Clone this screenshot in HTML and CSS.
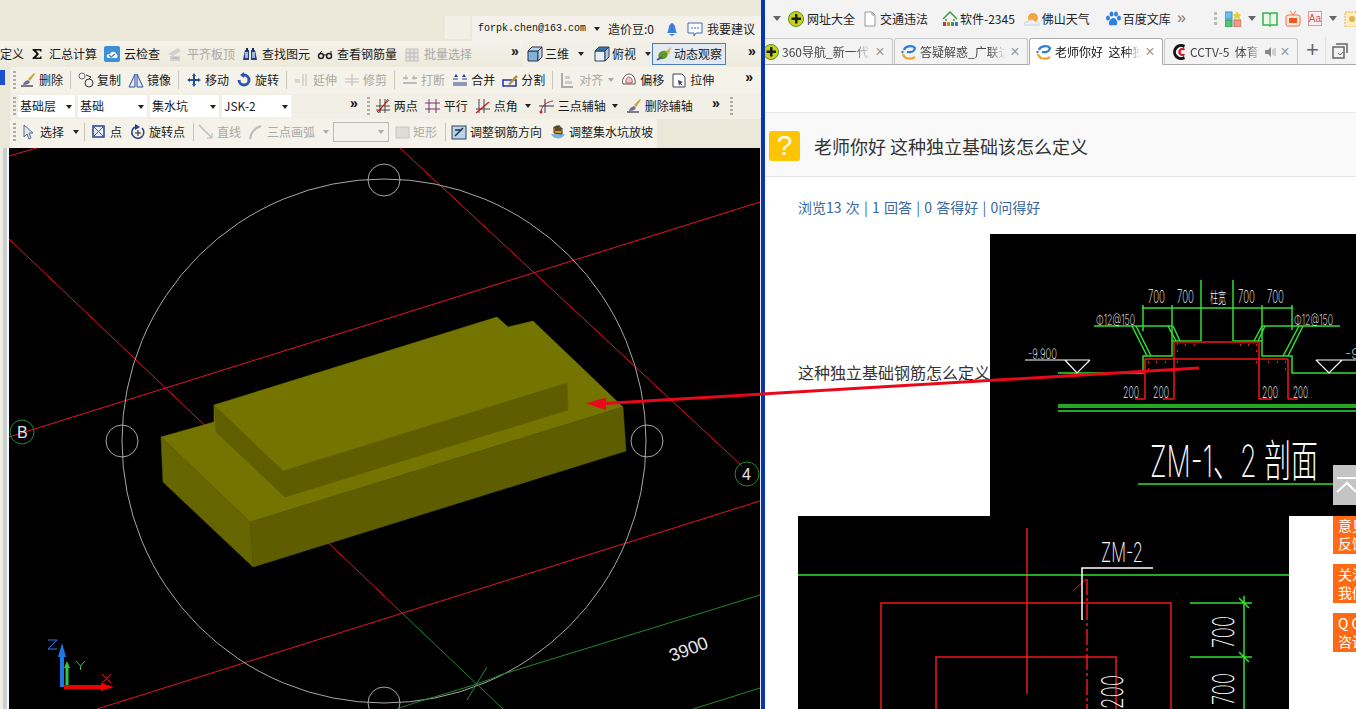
FILE: index.html
```html
<!DOCTYPE html>
<html lang="zh">
<head>
<meta charset="utf-8">
<title>老师你好 这种独立基础该怎么定义</title>
<link rel="stylesheet" href="styles.css">
</head>
<body>
<svg class="defs" width="0" height="0">
  <symbol id="brush" viewBox="0 0 16 16"><path d="M1 14h12" stroke="#555" stroke-width="1.5"/><path d="M3 13c1-4 3-4 5-5l2 2c-1 2-3 3-7 3z" fill="#7a6a9a"/><path d="M8 7l6-6 1 1-5 7z" fill="#c9a640"/></symbol>
  <symbol id="copy" viewBox="0 0 16 16"><circle cx="4" cy="4" r="3" fill="none" stroke="#667"/><circle cx="11" cy="11" r="4" fill="none" stroke="#335"/><path d="M8 3l5 2-2 2" fill="none" stroke="#335"/></symbol>
  <symbol id="mirror" viewBox="0 0 16 16"><path d="M7 2v13H1zM9 2v13h6z" fill="#dfe8f6" stroke="#2c4f9e"/></symbol>
  <symbol id="move" viewBox="0 0 16 16"><path d="M8 1l2 3H9v3h3V6l3 2-3 2V9H9v3h1l-2 3-2-3h1V9H4v1L1 8l3-2v1h3V4H6z" fill="#23508f"/></symbol>
  <symbol id="rotate" viewBox="0 0 16 16"><path d="M8 3a5 5 0 1 1-5 5" fill="none" stroke="#2a55b5" stroke-width="3"/><path d="M8 0v6L4 3z" fill="#2a55b5"/></symbol>
  <symbol id="gline" viewBox="0 0 16 16"><path d="M1 8h5M1 10h5M9 2v12M12 2v12" stroke="#bbb" fill="none"/></symbol>
  <symbol id="gtrim" viewBox="0 0 16 16"><path d="M1 7h14M1 10h14M8 2v12" stroke="#bbb" fill="none"/></symbol>
  <symbol id="gsplit" viewBox="0 0 16 16"><path d="M1 11h14M1 6h5M10 6h5" stroke="#bbb" stroke-width="2" fill="none"/><path d="M4 3v5M12 3v5" stroke="#bbb"/></symbol>
  <symbol id="merge" viewBox="0 0 16 16"><path d="M1 11h14M1 13h14" stroke="#25408f" fill="none"/><path d="M4 2l2 3H2zM12 2l2 3h-4z" fill="#25408f"/><path d="M1 7h5M10 7h5" stroke="#25408f"/></symbol>
  <symbol id="split" viewBox="0 0 16 16"><rect x="1" y="8" width="13" height="6" fill="none" stroke="#23a" stroke-width="1.5"/><path d="M6 12l8-9 2 2-8 8z" fill="#b9923f"/></symbol>
  <symbol id="galign" viewBox="0 0 16 16"><path d="M2 1v14h11" stroke="#aaa" fill="none" stroke-width="2"/><path d="M5 4h5v3H5zM5 9h7v3H5z" fill="#ccc"/></symbol>
  <symbol id="offset" viewBox="0 0 16 16"><path d="M2 12c-2-4 2-10 6-10s7 5 6 10z" fill="#fff" stroke="#555"/><path d="M5 11c-1-3 1-6 3-6s4 3 3 6z" fill="#f0c6c6" stroke="#b55"/></symbol>
  <symbol id="stretch" viewBox="0 0 16 16"><path d="M2 2h9l3 3v10H2z" fill="#fff" stroke="#445"/><path d="M7 8l5 2-2 1 2 3-3-2-1 2z" fill="#446"/></symbol>
  <symbol id="sum" viewBox="0 0 16 16"><path d="M3.500 3h9v2.500h-1.500v-1H7l3 3.500-3 3.500h4v-1h1.500V13h-9v-1l4-4-4-4z" fill="#111"/></symbol>
  <symbol id="cloud" viewBox="0 0 16 16"><rect width="16" height="16" rx="2" fill="#3e8fd6"/><path d="M3 11c-1-3 2-3 3-3 1-3 6-3 6 0 2 0 2 4 0 4H4z" fill="#fff"/><path d="M5 9l2 2 4-3" fill="none" stroke="#3e8fd6" stroke-width="1.500"/></symbol>
  <symbol id="gboard" viewBox="0 0 16 16"><path d="M1 8l10-6 3 3-8 5zM3 10h10v5H3z" fill="#cfd2cd"/><path d="M5 12h7" stroke="#aab"/></symbol>
  <symbol id="bino" viewBox="0 0 16 16"><path d="M1 14l2-10h4v10zM9 14V4h4l2 10z" fill="#273f7e"/><path d="M3 6h3v6H3zM10 6h3v6h-3z" fill="#9fb6dc"/><path d="M4 2h2v3H4zM10 2h2v3h-2z" fill="#152a60"/></symbol>
  <symbol id="glasses" viewBox="0 0 16 16"><circle cx="4" cy="10" r="2.500" fill="none" stroke="#222" stroke-width="1.500"/><circle cx="12" cy="10" r="2.500" fill="none" stroke="#222" stroke-width="1.500"/><path d="M6 9h3M2 8l3-3M14 8V5" stroke="#222" fill="none"/></symbol>
  <symbol id="gbatch" viewBox="0 0 16 16"><rect x="2" y="3" width="12" height="12" fill="#e4e2da" stroke="#c3c3bd"/><path d="M2 7h12M2 11h12M6 3v12M10 3v12" stroke="#bbb"/></symbol>
  <symbol id="cube" viewBox="0 0 16 16"><path d="M1 5h10v10H1z" fill="#7fb2dc" stroke="#334"/><path d="M1 5l4-4h10l-4 4zM11 5l4-4v10l-4 4z" fill="#b9d6ee" stroke="#334"/></symbol>
  <symbol id="cube2" viewBox="0 0 16 16"><path d="M1 5h10v10H1z" fill="#e7eef7" stroke="#345"/><path d="M1 5l4-4h10l-4 4z" fill="#3c74ae" stroke="#345"/><path d="M11 5l4-4v10l-4 4z" fill="#a9c8e6" stroke="#345"/></symbol>
  <symbol id="orbit" viewBox="0 0 16 16"><ellipse cx="7" cy="9" rx="5" ry="4" fill="#5a9a2c" transform="rotate(-30 7 9)"/><path d="M9 6l6-5-2 7" fill="#d4b13a"/><path d="M1 14l5-3" stroke="#4a4aa0" stroke-width="2"/></symbol>
  <symbol id="twop" viewBox="0 0 16 16"><path d="M1 12h14M1 8h14M3 15L13 1" stroke="#444"/><path d="M5 1v14M10 1v14" stroke="#444"/><path d="M2 14L14 2" stroke="#c22"/></symbol>
  <symbol id="par" viewBox="0 0 16 16"><path d="M0 5h15M0 11h15M4 1v14M11 1v14" stroke="#7b2f6e"/></symbol>
  <symbol id="ang" viewBox="0 0 16 16"><path d="M1 11h14M4 1v14M9 1v14" stroke="#445"/><path d="M1 15L14 4" stroke="#c22" stroke-width="1.500"/></symbol>
  <symbol id="arc3" viewBox="0 0 16 16"><path d="M2 15c0-7 5-11 12-12" fill="none" stroke="#c22"/><path d="M0 8h15M6 1v14" stroke="#335"/><circle cx="2" cy="14" r="1.500" fill="#c22"/></symbol>
  <symbol id="cursor" viewBox="0 0 16 16"><path d="M4 1v12l3-3 2 5 2-1-2-5h4z" fill="#dfe6f2" stroke="#5a6a8a"/></symbol>
  <symbol id="pt" viewBox="0 0 16 16"><rect x="2" y="2" width="11" height="11" fill="#e9eef8" stroke="#25408f" stroke-width="1.500"/><path d="M2 2l11 11M13 2L2 13" stroke="#a33"/></symbol>
  <symbol id="rotpt" viewBox="0 0 16 16"><path d="M5 3a6 6 0 1 0 7 1" fill="none" stroke="#25408f" stroke-width="1.500"/><path d="M5 0l5 3-5 3z" fill="#25408f"/><path d="M8 6v6M5 9h6" stroke="#222"/></symbol>
  <symbol id="gstr" viewBox="0 0 16 16"><path d="M1 1l13 13" stroke="#bbb" stroke-width="1.500"/><path d="M14 14V9M14 14H9" stroke="#bbb"/></symbol>
  <symbol id="garc" viewBox="0 0 16 16"><path d="M2 15C3 8 7 4 13 2" stroke="#bbb" stroke-width="2" fill="none"/></symbol>
  <symbol id="grect" viewBox="0 0 16 16"><rect x="2" y="3" width="13" height="11" fill="#dedcd4" stroke="#c8c8c0"/></symbol>
  <symbol id="adj" viewBox="0 0 16 16"><rect x="1" y="2" width="14" height="13" fill="#b8d2ec" stroke="#345"/><path d="M4 12l8-8M4 6h7" stroke="#234" stroke-width="1.500"/></symbol>
  <symbol id="slope" viewBox="0 0 16 16"><path d="M1 10c3 6 11 6 14 0z" fill="#7fb2dc"/><path d="M4 9V3h2v4-5h2v5-5h2v5-3h2v6z" fill="#d99a1e" stroke="#332"/></symbol>
  <symbol id="bell" viewBox="0 0 16 16"><path d="M3 12c2-2 1-9 5-10 4 1 3 8 5 10z" fill="#3d7fd9"/><path d="M5 13h6l-3 2z" fill="#3d7fd9"/></symbol>
  <symbol id="chat" viewBox="0 0 16 16"><path d="M1 2h14v10H9l-2 3v-3H1z" fill="#fff" stroke="#3d6fb5"/><path d="M4 7h8" stroke="#3d6fb5" stroke-dasharray="2 1"/></symbol>
  <symbol id="n360" viewBox="0 0 16 16"><circle cx="8" cy="8" r="7.500" fill="#cfcf15" stroke="#4a9a22"/><path d="M7 3h2.500v3.500H13V9H9.500v3.500H7V9H3.500V6.500H7z" fill="#122"/></symbol>
  <symbol id="doc" viewBox="0 0 16 16"><path d="M3 1h7l3 3v11H3z" fill="#fff" stroke="#999"/><path d="M10 1v3h3" fill="none" stroke="#999"/></symbol>
  <symbol id="h2345" viewBox="0 0 16 16"><path d="M1 8l7-7 7 7M4 8v2M12 8v2" fill="none" stroke="#3f9e45" stroke-width="1.500"/><path d="M1 11h3v4H1z" fill="#c33"/><path d="M5 11h3v4H5z" fill="#d88a1f"/><path d="M9 11h3v4H9z" fill="#3f9e45"/><path d="M13 11h3v4h-3z" fill="#2b7fd0"/></symbol>
  <symbol id="sun" viewBox="0 0 16 16"><circle cx="9" cy="7" r="5" fill="#f2a63c"/><path d="M0 14c0-3 3-4 4-3 1-3 6-3 7 0 2-1 5 1 4 3z" fill="#eef3f8" stroke="#ccd"/></symbol>
  <symbol id="paw" viewBox="0 0 16 16"><g fill="#2f7fe0"><ellipse cx="3" cy="7" rx="2" ry="2.500"/><ellipse cx="6.500" cy="3" rx="2" ry="2.500"/><ellipse cx="11" cy="3" rx="2" ry="2.500"/><ellipse cx="14" cy="7" rx="2" ry="2.500"/><path d="M8.500 7c3 0 5 5 3 7-1 1-2 0-3 0s-2 1-4 0c-2-2 1-7 4-7z"/></g></symbol>
  <symbol id="grid4" viewBox="0 0 16 16"><rect x="0" y="1" width="7" height="7" fill="#6cc0ee" stroke="#3a8fc5"/><path d="M12 0l1.500 3 3 .5-2 2 .5 3-3-1.500-3 1.500.5-3-2-2 3-.5z" fill="#eccc30"/><rect x="0" y="9" width="7" height="7" fill="#55c47a" stroke="#2f9a55"/><rect x="9" y="9" width="7" height="7" fill="#ee9a8a" stroke="#d06a5a"/></symbol>
  <symbol id="book" viewBox="0 0 16 16"><path d="M1 2h6l1 1 1-1h6v12H9l-1 1-1-1H1z" fill="#eaf8e8" stroke="#35b24a" stroke-width="1.500"/><path d="M8 3v11" stroke="#35b24a"/></symbol>
  <symbol id="tv" viewBox="0 0 16 16"><rect x="1" y="4" width="14" height="11" rx="2" fill="#fbe6da" stroke="#ea7a45"/><rect x="4" y="7" width="8" height="5" fill="#ea5a25"/><path d="M5 0l3 4 3-4" fill="none" stroke="#ea7a45"/></symbol>
  <symbol id="coupon" viewBox="0 0 16 16"><rect x="1" y="1" width="15" height="15" fill="#fdeec2" stroke="#e5b24a" stroke-dasharray="2 1"/><circle cx="8" cy="8" r="3" fill="#e5b24a"/></symbol>
  <symbol id="ie" viewBox="0 0 16 16"><path d="M3 6c1-4 8-5 11-2-1 5-5 4-8 4" fill="none" stroke="#2d7fd6" stroke-width="2.200"/><path d="M2 10c1 5 8 6 12 3" fill="none" stroke="#eda42e" stroke-width="2.200"/><circle cx="1.500" cy="8" r="1.200" fill="#2d7fd6"/></symbol>
  <symbol id="cctv" viewBox="0 0 16 16"><path d="M14 1a8 8 0 1 0 0 14l-1-3a5 5 0 1 1 0-8z" fill="#111"/><path d="M14 5a4 4 0 1 0 0 6l-1-1.500a2 2 0 1 1 0-3z" fill="#c8202a"/></symbol>
  <symbol id="win" viewBox="0 0 16 16"><path d="M4 1h11v9M1 4h11v11H1z" fill="none" stroke="#666" stroke-width="1.500"/><path d="M6 10l2 2 3-3" fill="none" stroke="#666"/></symbol>
  <symbol id="speaker" viewBox="0 0 12 12"><path d="M1 4h3l3-3v10L4 8H1z" fill="#888"/><path d="M9 3v6M11 2v8" stroke="#aaa"/></symbol>
</svg>

<div class="screen">
  <section class="app">
    <i class="rail-top"></i>
    <div class="topbar">
      <span class="blank"></span>
      <div class="account">
        <span class="mail">forpk.chen@163.com</span><i class="dd acc-dd"></i>
        <span class="lab">造价豆:0</span>
        <svg class="ic bell"><use href="#bell"/></svg>
        <svg class="ic"><use href="#chat"/></svg>
        <span class="lab">我要建议</span>
      </div>
    </div>

    <div class="tb r2">
      <span class="lab first">定义</span>
      <span class="it"><svg class="ic"><use href="#sum"/></svg>汇总计算</span>
      <span class="it"><svg class="ic"><use href="#cloud"/></svg>云检查</span>
      <span class="it off"><svg class="ic"><use href="#gboard"/></svg>平齐板顶</span>
      <span class="it"><svg class="ic"><use href="#bino"/></svg>查找图元</span>
      <span class="it"><svg class="ic"><use href="#glasses"/></svg>查看钢筋量</span>
      <span class="it off"><svg class="ic"><use href="#gbatch"/></svg>批量选择</span>
      <span class="more m40">»</span>
      <span class="view">
        <span class="it i3d"><svg class="ic"><use href="#cube"/></svg>三维</span><i class="dd dd10"></i>
        <span class="it i3d pv"><svg class="ic"><use href="#cube2"/></svg>俯视</span><i class="dd dd10"></i>
        <span class="it active"><svg class="ic"><use href="#orbit"/></svg>动态观察</span>
      </span>
      <span class="more end">»</span>
    </div>

    <div class="tb r3">
      <i class="grip"></i>
      <span class="it"><svg class="ic"><use href="#brush"/></svg>删除</span><i class="sep"></i>
      <span class="it"><svg class="ic"><use href="#copy"/></svg>复制</span>
      <span class="it"><svg class="ic"><use href="#mirror"/></svg>镜像</span><i class="sep"></i>
      <span class="it"><svg class="ic"><use href="#move"/></svg>移动</span>
      <span class="it"><svg class="ic"><use href="#rotate"/></svg>旋转</span><i class="sep"></i>
      <span class="it off"><svg class="ic"><use href="#gline"/></svg>延伸</span>
      <span class="it off"><svg class="ic"><use href="#gtrim"/></svg>修剪</span><i class="sep"></i>
      <span class="it off"><svg class="ic"><use href="#gsplit"/></svg>打断</span>
      <span class="it"><svg class="ic"><use href="#merge"/></svg>合并</span>
      <span class="it"><svg class="ic"><use href="#split"/></svg>分割</span><i class="sep"></i>
      <span class="it off"><svg class="ic"><use href="#galign"/></svg>对齐</span><i class="dd off-dd"></i>
      <span class="it"><svg class="ic"><use href="#offset"/></svg>偏移</span>
      <span class="it"><svg class="ic"><use href="#stretch"/></svg>拉伸</span>
      <span class="more end">»</span>
    </div>

    <div class="tb r4">
      <i class="grip"></i>
      <span class="combo c-a">基础层<i class="dd"></i></span>
      <span class="combo">基础<i class="dd"></i></span>
      <span class="combo">集水坑<i class="dd"></i></span>
      <span class="combo">JSK-2<i class="dd"></i></span>
      <span class="more m4">»</span>
      <i class="grip g2"></i>
      <span class="it"><svg class="ic"><use href="#twop"/></svg>两点</span>
      <span class="it"><svg class="ic"><use href="#par"/></svg>平行</span>
      <span class="it"><svg class="ic"><use href="#ang"/></svg>点角</span><i class="dd dd10"></i>
      <span class="it fourc"><svg class="ic"><use href="#arc3"/></svg>三点辅轴</span><i class="dd dd10"></i>
      <span class="it fourc"><svg class="ic"><use href="#brush"/></svg>删除辅轴</span>
      <span class="more m22">»</span>
      <i class="grip g3"></i>
    </div>

    <div class="tb r5">
      <i class="grip"></i>
      <span class="it sel"><svg class="ic"><use href="#cursor"/></svg>选择</span><i class="dd dd-sel"></i><i class="sep"></i>
      <span class="it pt"><svg class="ic"><use href="#pt"/></svg>点</span>
      <span class="it"><svg class="ic"><use href="#rotpt"/></svg>旋转点</span><i class="sep"></i>
      <span class="it off str"><svg class="ic"><use href="#gstr"/></svg>直线</span>
      <span class="it off"><svg class="ic"><use href="#garc"/></svg>三点画弧</span><i class="dd off-dd arc-dd"></i>
      <span class="box"><i class="dd off-dd"></i></span>
      <span class="it off rect"><svg class="ic"><use href="#grect"/></svg>矩形</span><i class="sep"></i>
      <span class="it adjust"><svg class="ic"><use href="#adj"/></svg>调整钢筋方向</span>
      <span class="it"><svg class="ic"><use href="#slope"/></svg>调整集水坑放坡</span>
    </div>

    <div class="work">
      <div class="rail"></div>
      <svg class="model" viewBox="9 148 751 561" width="751" height="561">
        <g fill="none" stroke="#e8102c" stroke-width="1">
          <path d="M9 437L760 202M97 709L760 501M400 148L742 466M9 239L402 613M9 156L40 147"/>
        </g>
        <g fill="none" stroke="#a8a8a8" stroke-width="1">
          <circle cx="384" cy="441" r="262"/>
          <circle cx="384" cy="180" r="16"/><circle cx="122" cy="441" r="16"/>
          <circle cx="647" cy="441" r="16"/><circle cx="384" cy="703" r="16"/>
        </g>
        <g fill="none" stroke="#1f8a2f" stroke-width="1">
          <path d="M397 709C420 700 480 685 500 675L760 595M693 709L760 688M402 613L503 709M487 667L467 700"/>
          <circle cx="22" cy="432" r="12"/><circle cx="747" cy="474" r="12"/>
        </g>
        <text class="axis" x="17" y="438">B</text>
        <text class="axis" x="742" y="480">4</text>
        <text class="dim" transform="translate(672 662) rotate(-21)">3900</text>
        <polygon class="top" points="161,437 214,422 214,405 497,317 508,327 533,321 623,407 250,522"/>
        <polygon class="left" points="161,437 250,522 253,567 163,482"/>
        <polygon class="front" points="250,522 623,407 626,451 253,567"/>
        <polygon class="left upper" points="214,405 283,471 285,497 216,432"/>
        <polygon class="front" points="283,471 567,383 568,410 285,497"/>
        <g>
          <path d="M62 687V655" stroke="#1e78e8" stroke-width="4"/><path d="M62 643l4 14h-8z" fill="#1e78e8"/>
          <path d="M67 687V667" stroke="#2fc83f" stroke-width="3"/><path d="M67 661l3 7h-6z" fill="#2fc83f"/>
          <path d="M64 687h38" stroke="#e00" stroke-width="4"/><path d="M114 687l-13-4v8z" fill="#e00"/>
          <path d="M48 640h9l-9 9h9" fill="none" stroke="#3a7be0"/>
          <path d="M76 661l4.500 5 4.500-5M80.500 666v4" fill="none" stroke="#2fc83f"/>
          <path d="M102 674l9 9M111 674l-9 9" stroke="#d01a1a"/>
        </g>
      </svg>
    </div>
  </section>

  <div class="divider"></div>

  <section class="browser">
    <div class="marks">
      <i class="dd gray"></i>
      <span class="mk"><svg class="ic"><use href="#n360"/></svg>网址大全</span>
      <span class="mk mk-doc"><svg class="ic"><use href="#doc"/></svg>交通违法</span>
      <span class="mk"><svg class="ic"><use href="#h2345"/></svg>软件-2345</span>
      <span class="mk mk-sun"><svg class="ic"><use href="#sun"/></svg>佛山天气</span>
      <span class="mk"><svg class="ic"><use href="#paw"/></svg>百度文库</span>
      <span class="chev">»</span>
      <i class="dots"></i>
      <svg class="ic"><use href="#grid4"/></svg><i class="dd gray grid-dd"></i>
      <svg class="ic"><use href="#book"/></svg>
      <svg class="ic"><use href="#tv"/></svg>
      <span class="aa">Aa</span><i class="dd gray"></i>
      <svg class="ic"><use href="#coupon"/></svg>
    </div>

    <div class="tabs">
      <div class="tab t1"><svg class="ic"><use href="#n360"/></svg><span class="tt">360导航_新一代</span><b class="x">×</b></div>
      <div class="tab"><svg class="ic"><use href="#ie"/></svg><span class="tt">答疑解惑_广联达</span><b class="x">×</b></div>
      <div class="tab on"><svg class="ic"><use href="#ie"/></svg><span class="tt">老师你好&nbsp; 这种独</span><b class="x">×</b></div>
      <div class="tab"><svg class="ic"><use href="#cctv"/></svg><span class="tt">CCTV-5&nbsp; 体育</span><svg class="spk"><use href="#speaker"/></svg><b class="x">×</b></div>
      <span class="plus">+</span>
      <svg class="ic wn"><use href="#win"/></svg>
    </div>

    <div class="blankbar"></div>

    <header class="qhead">
      <span class="qmark">?</span>
      <h1 class="qtitle">老师你好 这种独立基础该怎么定义</h1>
    </header>

    <p class="stats">浏览13 次 | 1 回答 | 0 答得好 | 0问得好</p>

    <div class="qbody">
      <span class="qtext">这种独立基础钢筋怎么定义</span>
      <svg class="pic1" viewBox="0 0 366 282" width="366" height="282">
        <g fill="none" stroke="#30e030" stroke-width="1.500">
          <path d="M152 74H303M153 71V97M182 71V107M211 46V107M243 46V107M272 71V107M302 71V96M104 92H182M272 92H350"/>
          <path d="M68 139H153V122H182V107H211M243 107H272V122H302V139H366"/>
          <path d="M142 92L157 122M146 92L161 122M178 92L186 107M183 92L190 107M275 92L268 107M272 92L264 107M313 92L298 122M309 92L293 122"/>
          <path d="M68 171H366M68 173H366M68 177H366M148 250H343"/>
        </g>
        <g fill="none" stroke="#f01818" stroke-width="1.500">
          <path d="M185 108H269M184 108V165M269 108V165M155 125H298M155 125V165M298 125V165M145 165H155M173 165H184M269 165H282M298 165H308"/>
          <path d="M187 110h1M195 111h1M204 111h1M187 117h1M250 111h1M258 111h1M266 111h1M266 117h1M158 128h1M166 128h1M175 128h1M187 128h1M266 128h1M278 128h1M287 128h1M295 128h1M158 135h1M295 135h1" stroke-width="2"/>
        </g>
        <g fill="none" stroke="#fff" stroke-width="1.200">
          <path d="M35 126H100M75 126L87 139L100 126M326 126H366M326 126L339 139L352 126"/>
        </g>
        <g class="cad">
          <text x="158" y="69" textLength="17" lengthAdjust="spacingAndGlyphs" font-size="18">700</text>
          <text x="187" y="69" textLength="17" lengthAdjust="spacingAndGlyphs" font-size="18">700</text>
          <text x="220" y="69" textLength="16" lengthAdjust="spacingAndGlyphs" font-size="15">柱宽</text>
          <text x="248" y="69" textLength="17" lengthAdjust="spacingAndGlyphs" font-size="18">700</text>
          <text x="277" y="69" textLength="17" lengthAdjust="spacingAndGlyphs" font-size="18">700</text>
          <text x="106" y="91" textLength="39" lengthAdjust="spacingAndGlyphs" font-size="14">Φ12@150</text>
          <text x="304" y="91" textLength="39" lengthAdjust="spacingAndGlyphs" font-size="14">Φ12@150</text>
          <text x="38" y="125" textLength="29" lengthAdjust="spacingAndGlyphs" font-size="14">-9.900</text>
          <text x="355" y="125" font-size="14">-9</text>
          <text x="133" y="164" textLength="16" lengthAdjust="spacingAndGlyphs" font-size="16">200</text>
          <text x="163" y="164" textLength="16" lengthAdjust="spacingAndGlyphs" font-size="16">200</text>
          <text x="272" y="164" textLength="16" lengthAdjust="spacingAndGlyphs" font-size="16">200</text>
          <text x="303" y="164" textLength="15" lengthAdjust="spacingAndGlyphs" font-size="16">200</text>
          <text x="160" y="243" textLength="168" lengthAdjust="spacingAndGlyphs" font-size="44">ZM-1、2 剖面</text>
        </g>
      </svg>
    </div>

    <svg class="pic2" viewBox="0 0 491 193" width="491" height="193">
      <g fill="none" stroke="#f01818" stroke-width="1.500">
        <path d="M229 12V178M83 193V87H373V193M138 193V141H318V193"/>
        <path d="M289 63V193" stroke-dasharray="16 3 3 3"/>
        <path d="M275 75L288 63" stroke-width="1"/>
      </g>
      <g fill="none" stroke="#30e030" stroke-width="1.500">
        <path d="M0 59H491M392 87H454M392 141H454M446 80V193M441 82l10 10M441 136l10 10"/>
      </g>
      <path d="M284 104V52H355" fill="none" stroke="#fff" stroke-width="1.500"/>
      <g class="cad">
        <text x="303" y="46" textLength="42" lengthAdjust="spacingAndGlyphs" font-size="27">ZM-2</text>
        <text transform="translate(436 132) rotate(-90)" textLength="32" lengthAdjust="spacingAndGlyphs" font-size="30">700</text>
        <text transform="translate(436 189) rotate(-90)" textLength="32" lengthAdjust="spacingAndGlyphs" font-size="30">700</text>
        <text transform="translate(325 193) rotate(-90)" textLength="34" lengthAdjust="spacingAndGlyphs" font-size="30">200</text>
      </g>
    </svg>

    <aside class="side">
      <span class="totop"><svg width="23" height="40" viewBox="0 0 23 40"><path d="M4 13h19M4 27l10-9 9 9" fill="none" stroke="#fff" stroke-width="2"/></svg></span>
      <span class="fb fb1">意见<br>反馈</span>
      <span class="fb">关注<br>我们</span>
      <span class="fb">Q Q<br>咨询</span>
    </aside>
  </section>

  <svg class="arrow" viewBox="0 0 1356 709" width="1356" height="709">
    <path d="M1199 368L604 403.500" stroke="#e8081a" stroke-width="3" fill="none"/>
    <path d="M586 403.500L606 397.500V410z" fill="#e8081a"/>
  </svg>
</div>
</body>
</html>
```

FILE: styles.css
```css
* { box-sizing: border-box; }
html, body { margin: 0; height: 100%; overflow: hidden; background: #fff; }
body { font: 12px/16px "Noto Sans CJK SC", "Liberation Sans", sans-serif; color: #1a1a1a; }
.defs { position: absolute; }
.screen { position: relative; display: flex; width: 1356px; height: 709px; overflow: hidden; }
i { display: block; font-style: normal; flex: none; }
.ic { width: 16px; height: 16px; flex: none; display: block; }

/* left: the CAD app */
.app { position: relative; width: 761px; height: 709px; flex: none; background: #ebe8da; display: flex; flex-direction: column; overflow: hidden; }
.rail-top { position: absolute; left: 0; top: 70px; width: 5px; height: 15px; background: #1a50d0; }
.topbar { height: 41px; padding-top: 16px; display: flex; align-items: flex-start; padding-left: 445px; gap: 2px; flex: none; }
.blank { width: 25px; height: 23px; background: #f1efe6; }
.account { width: 289px; height: 26px; background: #f3f1e9; display: flex; align-items: center; padding-left: 6px; }
.mail { font: 10px/14px "Liberation Mono", monospace; color: #111; width: 108px; }
.acc-dd { margin: 0 8px 0 8px; }
.account .lab { white-space: nowrap; }
.bell { margin: 0 5px 0 10px; }
.account .bell + .ic { margin-right: 4px; margin-left: 2px; }
.dd { width: 0; height: 0; border: 3px solid transparent; border-top: 4px solid #222; border-bottom: 0; }
.dd10 { margin: 0 1px; }
.off-dd { border-top-color: #aaa; }

.tb { display: flex; align-items: center; white-space: nowrap; flex: none; }
.it { display: flex; align-items: center; gap: 3px; flex: none; }
.off { color: #a9a9a4; }
.sep { width: 1px; height: 18px; background: #c9c6b8; }
.more { font: bold 14px/14px "Liberation Sans", sans-serif; margin-top: -6px; color: #111; }
.grip { width: 3px; height: 18px; background: repeating-linear-gradient(#b0ae9f 0 2px, transparent 2px 4px); }

.r2 { height: 26px; gap: 7px; background: linear-gradient(#f5f3ea, #ece9dc); }
.r2 .it { gap: 4px; }
.r2 .first { width: 22px; }
.m40 { margin-left: 32px; }
.view { display: flex; align-items: center; gap: 9px; background: #f1efe6; height: 26px; padding-left: 4px; margin-left: -3px; }
.view .it.i3d { gap: 2px; }
.view .pv { gap: 4px; }
.view .dd10 { margin-left: 0; }
.r2 .active { background: #e3e9f1; border: 1px solid #4f7cb8; height: 22px; padding: 0 3px; gap: 2px; margin-left: -9px; }
.end { margin-left: 15px; }

.r3 { height: 26px; gap: 7px; margin-left: 10px; background: #f4f2e9; border-radius: 3px; }
.r3 .grip { margin: 0 -3px 0 3px; }
.r3 .off-dd { margin-left: -2px; }
.r3 .end { margin-left: 24px; }

.r4 { height: 26px; margin-left: 10px; padding-left: 3px; background: #f2f0e6; border-radius: 3px; }
.combo { width: 69px; height: 22px; background: #fff; display: flex; align-items: center; justify-content: space-between; padding-left: 2px; margin-right: 3px; font-size: 12px; }
.combo .dd { margin: 2px 3px 0 0; }
.c-a { width: 57px; margin-left: 2px; }
.m4 { margin-left: 56px; }
.g2 { margin: 0 5px 0 9px; }
.r4 .it { margin-right: 7px; }
.r4 .fourc { margin-right: 6px; }
.r4 .dd10 { margin: 0 8px 0 0; }
.m22 { margin-left: 13px; }
.g3 { margin-left: 10px; }

.r5 { width: 647px; height: 29px; padding-bottom: 3px; gap: 8px; margin-left: 10px; padding-left: 3px; background: #f4f2e9; border-radius: 3px; }
.sel { gap: 4px; margin-left: -4px; }
.dd-sel { margin: 0 -3px 0 1px; }
.pt { margin-left: -2px; }
.str { margin-left: -4px; margin-right: -1px; }
.arc-dd { margin-right: -4px; }
.rect { margin-left: -3px; }
.adjust { margin-left: -3px; }
.box { width: 56px; height: 20px; background: #f3f1ea; border: 1px solid #b9b9b0; display: flex; align-items: center; justify-content: flex-end; padding-right: 4px; }

.work { flex: 1; display: flex; min-height: 0; }
.rail { width: 9px; flex: none; background: #efece2; border-right: 2px solid #f8f7f3; box-shadow: inset -4px 0 0 #c9cdd6; }
.model { display: block; background: #000; flex: none; }
.model text { font-family: "Liberation Sans", sans-serif; fill: #e8e8e8; }
.axis { font-size: 16px; }
.dim { font-size: 18px; }
.top { fill: #747400; stroke: #747400; stroke-width: .5; }
.left { fill: #666600; stroke: #666600; stroke-width: .5; }
.upper { fill: #5f5f00; stroke: #5f5f00; }
.front { fill: #5e5e00; stroke: #5e5e00; stroke-width: .5; }

.divider { width: 4px; flex: none; background: #0a35b0; }

/* right: the browser */
.browser { position: relative; flex: 1; min-width: 0; background: #fff; display: flex; flex-direction: column; overflow: hidden; }
.marks { height: 37px; background: #f3f3f3; display: flex; align-items: center; padding-left: 8px; gap: 7px; flex: none; }
.marks .dd.gray { border-top-color: #666; border-width: 4px; border-top-width: 5px; border-bottom: 0; }
.mk { display: flex; align-items: center; gap: 2px; margin-right: 4px; white-space: nowrap; color: #222; }
.marks .mk:nth-child(2) { gap: 3px; margin-right: 3px; }
.mk-doc { margin-left: -3px; margin-right: 7px; }
.mk-sun { margin-left: -2px; margin-right: 8px; }
.chev { font: 16px/16px "Liberation Sans", sans-serif; color: #777; margin: -2px 21px 0 -5px; }
.dots { width: 3px; height: 14px; background: repeating-linear-gradient(#bbb 0 3px, transparent 3px 5px); margin-right: 1px; }
.marks .grid-dd { margin-right: -1px; }
.aa { width: 15px; height: 15px; border: 1px solid #d99; background: #fbeeee; color: #c55; font: 10px/13px "Liberation Sans", sans-serif; text-align: center; }

.tabs { height: 28px; background: #f3f3f3; border-bottom: 1px solid #aaa; display: flex; align-items: flex-end; flex: none; }
.tab { width: 134px; height: 27px; flex: none; display: flex; align-items: center; gap: 3px; padding: 0 6px; border: 1px solid #c8c8c8; border-radius: 3px 3px 0 0; margin-right: 1px; background: #f3f3f3; color: #444; margin-bottom: -1px; border-bottom: 1px solid #aaa; }
.t1 { width: 130px; margin-left: -2px; padding-left: 0; border-left: 0; }
.on { background: #fff; border-color: #aaa; border-bottom-color: #fff; color: #111; }
.tt { flex: 1; min-width: 0; white-space: nowrap; -webkit-mask-image: linear-gradient(90deg, #000 80%, transparent); mask-image: linear-gradient(90deg, #000 80%, transparent); }
.x { font: 16px/16px "Liberation Sans", sans-serif; color: #999; width: 12px; text-align: center; }
.spk { width: 12px; height: 12px; flex: none; }
.plus { width: 26px; text-align: center; font: 22px/26px "Liberation Sans", sans-serif; color: #666; margin-left: 1px; border-right: 1px solid #ddd; height: 27px; }
.wn { margin: 0 0 5px 6px; }

.blankbar { height: 48px; flex: none; border-bottom: 1px solid #e6e6e6; }
.qhead { height: 64px; flex: none; background: #f9f9f9; border-bottom: 1px solid #e4e4e4; display: flex; align-items: center; padding: 3px 0 0 4px; gap: 14px; }
.qmark { width: 31px; height: 30px; background: #fdc500; border-radius: 3px; color: #fff; font: 28px/30px "Liberation Sans", sans-serif; text-align: center; }
.qtitle { margin: 0; font-weight: 400; font-size: 18px; line-height: 24px; color: #333; }
.stats { margin: 0; padding: 21px 0 0 33px; height: 57px; font-size: 14px; line-height: 18px; word-spacing: 1.1px; color: #37679c; flex: none; }
.qbody { display: flex; align-items: center; padding-left: 33px; flex: none; height: 282px; }
.qtext { font-size: 16px; line-height: 22px; color: #333; width: 192px; flex: none; white-space: nowrap; margin-top: -6px; }
.pic1, .pic2 { display: block; background: #000; flex: none; }
.pic2 { margin-left: 33px; }
.cad text { fill: #fff; font-family: "Inter", "Noto Sans CJK SC", sans-serif; font-weight: 200; }

.side { position: absolute; right: 0; top: 465px; width: 23px; display: flex; flex-direction: column; overflow: hidden; }
.totop { height: 40px; background: #c4c4c4; margin-bottom: 11px; display: block; }
.fb { height: 39px; background: #ff6a13; color: #fff; font-size: 14px; line-height: 18px; padding: 1px 0 0 5px; margin-bottom: 10px; white-space: nowrap; overflow: hidden; }
.fb1 { height: 38px; padding-top: 0; }

.arrow { position: absolute; left: 0; top: 0; pointer-events: none; }
```
